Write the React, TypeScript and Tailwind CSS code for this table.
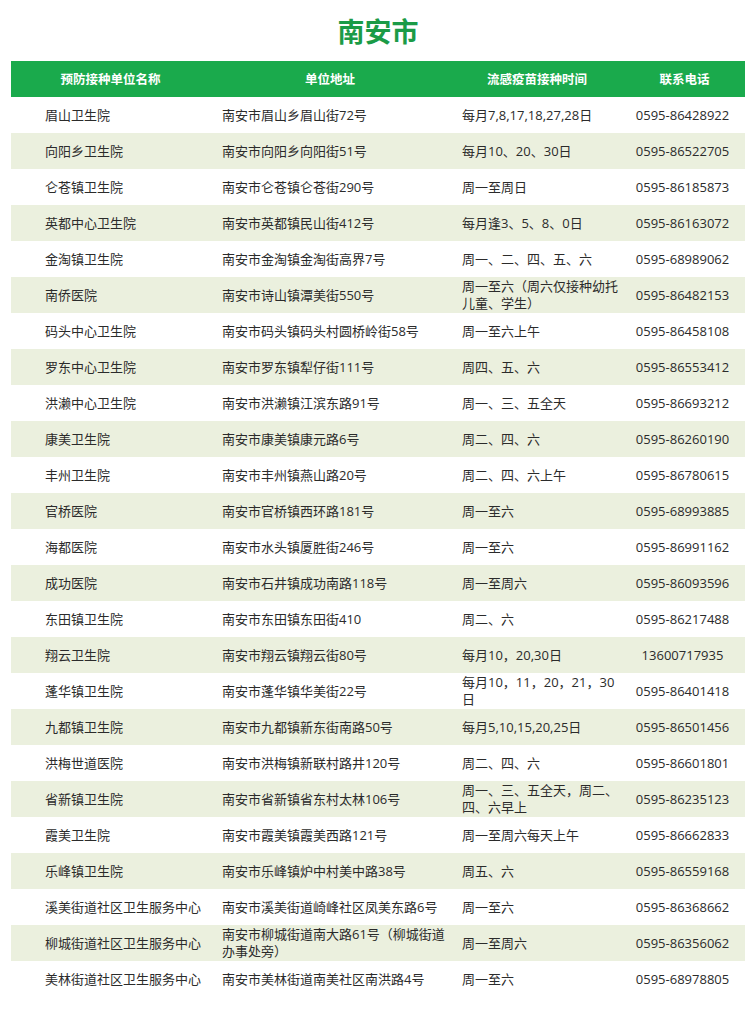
const rows: [string, string, string, string][] = [
  ['眉山卫生院', '南安市眉山乡眉山街72号', '每月7,8,17,18,27,28日', '0595-86428922'],
  ['向阳乡卫生院', '南安市向阳乡向阳街51号', '每月10、20、30日', '0595-86522705'],
  ['仑苍镇卫生院', '南安市仑苍镇仑苍街290号', '周一至周日', '0595-86185873'],
  ['英都中心卫生院', '南安市英都镇民山街412号', '每月逢3、5、8、0日', '0595-86163072'],
  ['金淘镇卫生院', '南安市金淘镇金淘街高界7号', '周一、二、四、五、六', '0595-68989062'],
  ['南侨医院', '南安市诗山镇潭美街550号', '周一至六（周六仅接种幼托\n儿童、学生）', '0595-86482153'],
  ['码头中心卫生院', '南安市码头镇码头村圆桥岭街58号', '周一至六上午', '0595-86458108'],
  ['罗东中心卫生院', '南安市罗东镇犁仔街111号', '周四、五、六', '0595-86553412'],
  ['洪濑中心卫生院', '南安市洪濑镇江滨东路91号', '周一、三、五全天', '0595-86693212'],
  ['康美卫生院', '南安市康美镇康元路6号', '周二、四、六', '0595-86260190'],
  ['丰州卫生院', '南安市丰州镇燕山路20号', '周二、四、六上午', '0595-86780615'],
  ['官桥医院', '南安市官桥镇西环路181号', '周一至六', '0595-68993885'],
  ['海都医院', '南安市水头镇厦胜街246号', '周一至六', '0595-86991162'],
  ['成功医院', '南安市石井镇成功南路118号', '周一至周六', '0595-86093596'],
  ['东田镇卫生院', '南安市东田镇东田街410', '周二、六', '0595-86217488'],
  ['翔云卫生院', '南安市翔云镇翔云街80号', '每月10，20,30日', '13600717935'],
  ['蓬华镇卫生院', '南安市蓬华镇华美街22号', '每月10，11，20，21，30\n日', '0595-86401418'],
  ['九都镇卫生院', '南安市九都镇新东街南路50号', '每月5,10,15,20,25日', '0595-86501456'],
  ['洪梅世道医院', '南安市洪梅镇新联村路井120号', '周二、四、六', '0595-86601801'],
  ['省新镇卫生院', '南安市省新镇省东村太林106号', '周一、三、五全天，周二、\n四、六早上', '0595-86235123'],
  ['霞美卫生院', '南安市霞美镇霞美西路121号', '周一至周六每天上午', '0595-86662833'],
  ['乐峰镇卫生院', '南安市乐峰镇炉中村美中路38号', '周五、六', '0595-86559168'],
  ['溪美街道社区卫生服务中心', '南安市溪美街道崎峰社区凤美东路6号', '周一至六', '0595-86368662'],
  ['柳城街道社区卫生服务中心', '南安市柳城街道南大路61号（柳城街道\n办事处旁）', '周一至周六', '0595-86356062'],
  ['美林街道社区卫生服务中心', '南安市美林街道南美社区南洪路4号', '周一至六', '0595-68978805'],
]

const cols = 'grid grid-cols-[199px_240px_174px_121px]'

export default function App() {
  return (
    <div className="w-[756px] min-h-[1014px] bg-white font-['Open_Sans','Noto_Sans_CJK_SC',sans-serif] text-[#2b2b2b]">
      {/* 标题 */}
      <div className="h-[61px] flex items-center justify-center">
        <h1 className="text-[27px] font-bold text-[#1b9b47] leading-none font-['Noto_Sans_CJK_SC',sans-serif]">南安市</h1>
      </div>

      <div className="mx-[11px] w-[734px]">
        {/* 表头 */}
        <div className={`${cols} h-[36px] bg-[#1aaa4c] text-white text-[12.5px] font-bold font-['Noto_Sans_CJK_SC',sans-serif]`}>
          <div className="flex items-center justify-center">预防接种单位名称</div>
          <div className="flex items-center justify-center">单位地址</div>
          <div className="flex items-center justify-center">流感疫苗接种时间</div>
          <div className="flex items-center justify-center">联系电话</div>
        </div>

        {rows.map((r, i) => (
          <div
            key={i}
            className={`${cols} h-[36px] text-[13px] leading-[17px] ${i % 2 === 1 ? 'bg-[#ebf0de]' : 'bg-white'}`}
          >
            <div className="flex items-center pl-[34px] whitespace-nowrap">{r[0]}</div>
            <div className="flex items-center pl-3 whitespace-pre-line">{r[1]}</div>
            <div className="flex items-center pl-3 whitespace-pre-line">{r[2]}</div>
            <div className="flex items-center justify-center pr-[4px]">{r[3]}</div>
          </div>
        ))}
      </div>
    </div>
  )
}
